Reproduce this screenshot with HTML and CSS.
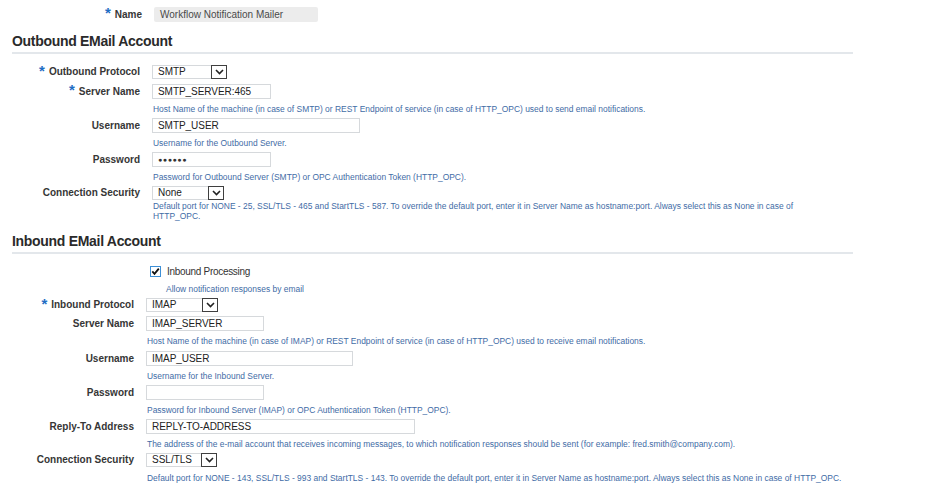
FILE: index.html
```html
<!DOCTYPE html>
<html>
<head>
<meta charset="utf-8">
<title>Workflow Notification Mailer</title>
<link rel="stylesheet" href="styles.css">
</head>
<body>
<div class="page">
  <div class="name-row">
    <div class="name-label"><span class="req">*</span>Name</div>
    <div class="name-value">Workflow Notification Mailer</div>
  </div>

  <h2 class="section-title">Outbound EMail Account</h2>
  <div class="form form-out">
    <div class="row first">
      <div class="label sel-label"><span class="req">*</span>Outbound Protocol</div>
      <div class="field">
        <div class="select w75"><span class="sel-text">SMTP</span><span class="sel-btn"><svg width="9" height="6" viewBox="0 0 9 6"><polyline points="1,1 4.5,4.5 8,1" fill="none" stroke="#222" stroke-width="1.6"/></svg></span></div>
      </div>
    </div>
    <div class="row after-sel">
      <div class="label"><span class="req">*</span>Server Name</div>
      <div class="field">
        <div class="input w119">SMTP_SERVER:465</div>
        <div class="help">Host Name of the machine (in case of SMTP) or REST Endpoint of service (in case of HTTP_OPC) used to send email notifications.</div>
      </div>
    </div>
    <div class="row">
      <div class="label">Username</div>
      <div class="field">
        <div class="input w208">SMTP_USER</div>
        <div class="help">Username for the Outbound Server.</div>
      </div>
    </div>
    <div class="row">
      <div class="label">Password</div>
      <div class="field">
        <div class="input w119 dots">&#9679;&#9679;&#9679;&#9679;&#9679;&#9679;</div>
        <div class="help">Password for Outbound Server (SMTP) or OPC Authentication Token (HTTP_OPC).</div>
      </div>
    </div>
    <div class="row">
      <div class="label sel-label">Connection Security</div>
      <div class="field">
        <div class="select w72"><span class="sel-text">None</span><span class="sel-btn"><svg width="9" height="6" viewBox="0 0 9 6"><polyline points="1,1 4.5,4.5 8,1" fill="none" stroke="#222" stroke-width="1.6"/></svg></span></div>
        <div class="help help-wrap">Default port for NONE - 25, SSL/TLS - 465 and StartTLS - 587. To override the default port, enter it in Server Name as hostname:port. Always select this as None in case of HTTP_OPC.</div>
      </div>
    </div>
  </div>

  <h2 class="section-title second">Inbound EMail Account</h2>
  <div class="form form-in">
    <div class="row first">
      <div class="label check-label"></div>
      <div class="field">
        <div class="check-line">
          <span class="checkbox"><svg width="11" height="11" viewBox="0 0 11 11"><rect x="0.5" y="0.5" width="10" height="10" fill="#fff" stroke="#3d8fd6"/><polyline points="2.3,5.4 4.5,7.8 8.8,2.6" fill="none" stroke="#111" stroke-width="1.8"/></svg></span>
          <span class="check-text">Inbound Processing</span>
        </div>
        <div class="help help-check">Allow notification responses by email</div>
      </div>
    </div>
    <div class="row">
      <div class="label sel-label"><span class="req">*</span>Inbound Protocol</div>
      <div class="field">
        <div class="select w72"><span class="sel-text">IMAP</span><span class="sel-btn"><svg width="9" height="6" viewBox="0 0 9 6"><polyline points="1,1 4.5,4.5 8,1" fill="none" stroke="#222" stroke-width="1.6"/></svg></span></div>
      </div>
    </div>
    <div class="row">
      <div class="label">Server Name</div>
      <div class="field">
        <div class="input w118">IMAP_SERVER</div>
        <div class="help">Host Name of the machine (in case of IMAP) or REST Endpoint of service (in case of HTTP_OPC) used to receive email notifications.</div>
      </div>
    </div>
    <div class="row gap5">
      <div class="label">Username</div>
      <div class="field">
        <div class="input w207">IMAP_USER</div>
        <div class="help">Username for the Inbound Server.</div>
      </div>
    </div>
    <div class="row">
      <div class="label">Password</div>
      <div class="field">
        <div class="input w118"></div>
        <div class="help">Password for Inbound Server (IMAP) or OPC Authentication Token (HTTP_OPC).</div>
      </div>
    </div>
    <div class="row">
      <div class="label">Reply-To Address</div>
      <div class="field">
        <div class="input w269">REPLY-TO-ADDRESS</div>
        <div class="help">The address of the e-mail account that receives incoming messages, to which notification responses should be sent (for example: fred.smith@company.com).</div>
      </div>
    </div>
    <div class="row">
      <div class="label sel-label">Connection Security</div>
      <div class="field">
        <div class="select w71"><span class="sel-text">SSL/TLS</span><span class="sel-btn"><svg width="9" height="6" viewBox="0 0 9 6"><polyline points="1,1 4.5,4.5 8,1" fill="none" stroke="#222" stroke-width="1.6"/></svg></span></div>
        <div class="help help-last">Default port for NONE - 143, SSL/TLS - 993 and StartTLS - 143. To override the default port, enter it in Server Name as hostname:port. Always select this as None in case of HTTP_OPC.</div>
      </div>
    </div>
  </div>
</div>
</body>
</html>
```

FILE: styles.css
```css
html, body {
  margin: 0;
  padding: 0;
  background: #ffffff;
}

body {
  font-family: "Liberation Sans", Arial, sans-serif;
  color: #333333;
}

.page {
  padding: 7px 0 0 12px;
}

/* Name row */
.name-row {
  display: flex;
  align-items: center;
  height: 15px;
}

.name-label {
  width: 130px;
  margin-right: 12px;
  text-align: right;
  font-size: 10px;
  font-weight: bold;
  line-height: 15px;
  color: #363636;
}

.name-value {
  width: 158px;
  height: 15px;
  padding-left: 6px;
  line-height: 15px;
  background: #ececec;
  border-radius: 2px;
  font-size: 10px;
  color: #4a4a4a;
}

/* Section headings */
.section-title {
  margin: 11px 0 0 0;
  width: 841px;
  padding-bottom: 3px;
  border-bottom: 2px solid #e3e7eb;
  font-size: 14px;
  line-height: 16px;
  font-weight: bold;
  letter-spacing: -0.3px;
  color: #2a2a2a;
}

.section-title.second {
  margin-top: 12px;
}

/* Form rows */
.form {
  display: flex;
  flex-direction: column;
}

.row {
  display: flex;
  align-items: flex-start;
  margin-top: 4px;
}

.row.first {
  margin-top: 11px;
}

.row.after-sel {
  margin-top: 5px;
}

.row.gap5 {
  margin-top: 5px;
}

.label {
  flex: none;
  margin-right: 12px;
  height: 15px;
  line-height: 15px;
  text-align: right;
  font-size: 10px;
  font-weight: bold;
  color: #363636;
  white-space: nowrap;
}

.label.sel-label {
  height: 14px;
  line-height: 14px;
}

.form-out .label {
  width: 128px;
}

.form-in .label {
  width: 122px;
}

.req {
  display: inline-block;
  vertical-align: top;
  height: 10px;
  line-height: 12px;
  margin-right: 4px;
  font-size: 15px;
  font-weight: bold;
  color: #1f6ec4;
}

.field {
  display: flex;
  flex-direction: column;
  align-items: flex-start;
}

/* Text inputs */
.input {
  box-sizing: border-box;
  height: 15px;
  padding-left: 5px;
  border: 1px solid #d6d9dc;
  background: #fff;
  font-size: 10px;
  line-height: 13px;
  letter-spacing: -0.05px;
  color: #222;
  white-space: nowrap;
}

.input.dots {
  font-size: 7px;
  letter-spacing: 0.6px;
  line-height: 13px;
  color: #333;
}

.w118 { width: 118px; }
.w119 { width: 119px; }
.w207 { width: 207px; }
.w208 { width: 208px; }
.w269 { width: 269px; }
.w71 { width: 71px; }
.w72 { width: 72px; }
.w75 { width: 75px; }

/* Select boxes */
.select {
  box-sizing: border-box;
  display: flex;
  height: 14px;
  border: 1px solid #d6d9dc;
  background: #fff;
}

.sel-text {
  flex: 1;
  padding-left: 5px;
  font-size: 10px;
  line-height: 12px;
  color: #222;
}

.sel-btn {
  box-sizing: border-box;
  width: 16px;
  margin: -1px -1px -1px 0;
  border: 1px solid #3f3f3f;
  background: #fff;
  display: flex;
  align-items: center;
  justify-content: center;
}

.sel-btn svg {
  display: block;
}

/* Help text */
.help {
  margin-top: 5px;
  padding-left: 1px;
  font-size: 8.45px;
  line-height: 10px;
  color: #3f6ca6;
  white-space: nowrap;
}

.help.help-wrap {
  margin-top: 1px;
  width: 660px;
  white-space: normal;
}

.help.help-last {
  margin-top: 6px;
}

/* Checkbox */
.check-line {
  display: flex;
  align-items: center;
  height: 12px;
  margin-left: 4px;
}

.checkbox {
  display: flex;
  width: 11px;
  height: 11px;
}

.check-text {
  margin-left: 6px;
  font-size: 10px;
  letter-spacing: -0.3px;
  color: #333;
}

.help.help-check {
  margin-top: 7px;
  padding-left: 20px;
}
```
